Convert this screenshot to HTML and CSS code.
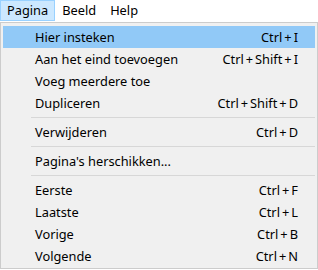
FILE: index.html
```html
<!DOCTYPE html>
<html>
<head>
<meta charset="utf-8">
<link rel="stylesheet" href="styles.css">
</head>
<body>
<div class="menubar">
  <div class="top-item active">Pagina</div>
  <div class="top-item">Beeld</div>
  <div class="top-item">Help</div>
</div>
<div class="menu">
  <div class="row hl"><span class="label">Hier insteken</span><span class="key">Ctrl<span class="plus">+</span>I</span></div>
  <div class="row"><span class="label">Aan het eind toevoegen</span><span class="key">Ctrl<span class="plus">+</span>Shift<span class="plus">+</span>I</span></div>
  <div class="row"><span class="label">Voeg meerdere toe</span><span class="key"></span></div>
  <div class="row"><span class="label">Dupliceren</span><span class="key">Ctrl<span class="plus">+</span>Shift<span class="plus">+</span>D</span></div>
  <div class="sep"></div>
  <div class="row"><span class="label">Verwijderen</span><span class="key">Ctrl<span class="plus">+</span>D</span></div>
  <div class="sep"></div>
  <div class="row"><span class="label">Pagina's herschikken...</span><span class="key"></span></div>
  <div class="sep"></div>
  <div class="row"><span class="label">Eerste</span><span class="key">Ctrl<span class="plus">+</span>F</span></div>
  <div class="row"><span class="label">Laatste</span><span class="key">Ctrl<span class="plus">+</span>L</span></div>
  <div class="row"><span class="label">Vorige</span><span class="key">Ctrl<span class="plus">+</span>B</span></div>
  <div class="row"><span class="label">Volgende</span><span class="key">Ctrl<span class="plus">+</span>N</span></div>
</div>
</body>
</html>
```
FILE: styles.css
```css
html, body {
  margin: 0;
  padding: 0;
  background: #ffffff;
}
body {
  font-family: "Noto Sans", "Open Sans", sans-serif;
  font-size: 12.8px;
  color: #000;
  width: 318px;
}
.menubar {
  display: flex;
  height: 22px;
  background: #fff;
}
.top-item {
  padding: 0 6px;
  line-height: 19px;
  height: 19px;
  border: 1px solid transparent;
}
.top-item.active {
  background: #cce8ff;
  border-color: #99d1ff;
}
.menu {
  border: 1px solid #cccccc;
  background: #f0f0f0;
  padding: 3px 2px 1px 2px;
}
.row {
  display: flex;
  justify-content: space-between;
  align-items: center;
  height: 22px;
  padding: 0 17px 0 32px;
}
.row.hl {
  background: #91c9f7;
}
.plus {
  margin: 0 2px;
}
.sep {
  height: 1px;
  background: #d7d7d7;
  margin: 3px 0 3px 28px;
}
```
